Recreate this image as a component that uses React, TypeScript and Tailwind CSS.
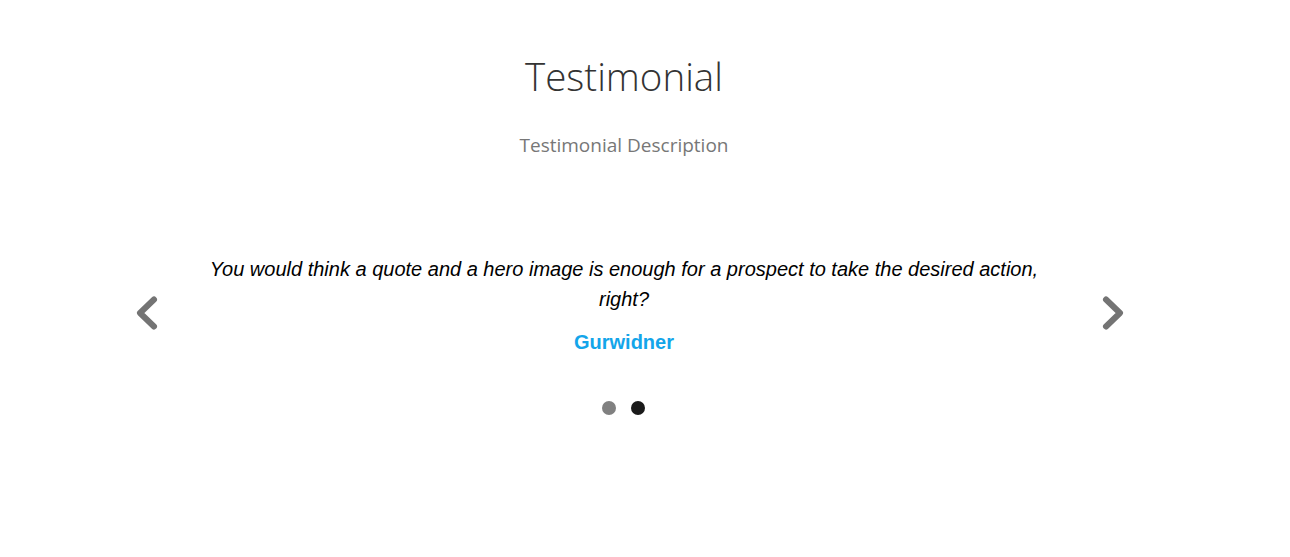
import React, { useState } from 'react';

const slides = [
  { quote: 'Some other kind words from a happy customer about the service.', name: 'Someone' },
  { quote: 'You would think a quote and a hero image is enough for a prospect to take the desired action, right?', name: 'Gurwidner' },
];

const Chevron = ({ dir }: { dir: 'left' | 'right' }) => (
  <svg width="28" height="36" viewBox="0 0 28 36" fill="none">
    <polyline
      points={dir === 'left' ? '21,4.5 7,18 21,31.5' : '7,4.5 21,18 7,31.5'}
      stroke="#747474"
      strokeWidth="6"
      strokeLinecap="round"
      strokeLinejoin="round"
    />
  </svg>
);

export default function App() {
  const [active, setActive] = useState(1);
  const slide = slides[active];

  return (
    <div className="w-[1248px] bg-white pt-[52px] pb-[130px]">
      {/* Header */}
      <div className="flex flex-col items-center">
        <h2 className="text-[38.5px] leading-[48px] font-light text-[#333] font-['Open_Sans',sans-serif]">
          Testimonial
        </h2>
        <p className="mt-[32px] text-[19px] leading-[26px] text-[#777] font-['Open_Sans',sans-serif]">
          Testimonial Description
        </p>
      </div>

      {/* Slider */}
      <div className="mt-[96px] flex items-center pl-[133px] pr-[121px]">
        <button onClick={() => setActive((active + slides.length - 1) % slides.length)} className="mt-[18px]">
          <Chevron dir="left" />
        </button>
        <div className="flex-1 flex justify-center pr-[12px]">
          <div className="flex flex-col items-center w-[850px] font-['Liberation_Sans',Arial,sans-serif]">
            <p className="italic text-[20px] leading-[30px] text-black text-center">{slide.quote}</p>
            <p className="mt-[16px] text-[20px] leading-[24px] font-bold text-[#13a5ea]">{slide.name}</p>
          </div>
        </div>
        <button onClick={() => setActive((active + 1) % slides.length)} className="mt-[18px]">
          <Chevron dir="right" />
        </button>
      </div>

      {/* Dots */}
      <div className="mt-[47px] flex justify-center gap-[15px] pr-[2px]">
        {slides.map((s, i) => (
          <button
            key={s.name}
            onClick={() => setActive(i)}
            className={`w-[14px] h-[14px] rounded-full ${i === active ? 'bg-[#1a1a1a]' : 'bg-[#808080]'}`}
          />
        ))}
      </div>
    </div>
  );
}
